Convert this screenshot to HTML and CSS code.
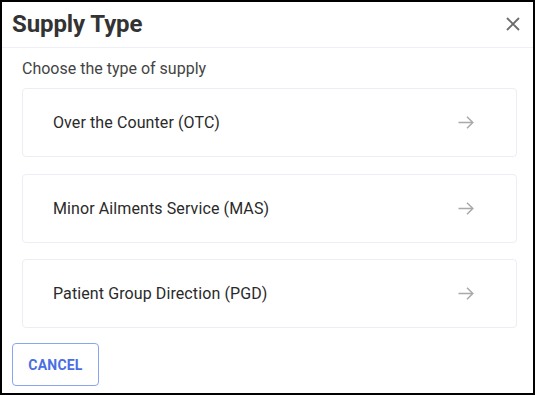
FILE: index.html
```html
<!DOCTYPE html>
<html>
<head>
<meta charset="utf-8">
<link rel="stylesheet" href="styles.css">
</head>
<body>
<div class="dialog">
  <div class="header">
    <h1 class="title">Supply Type</h1>
    <button class="close" aria-label="Close">
      <svg width="14" height="14" viewBox="0 0 14 14"><path d="M1 1L13 13M13 1L1 13" stroke="#6b6b6b" stroke-width="1.8" fill="none"/></svg>
    </button>
  </div>
  <div class="content">
    <p class="prompt">Choose the type of supply</p>
    <div class="options">
      <div class="option"><span>Over the Counter (OTC)</span>
        <svg class="arrow" width="16" height="13" viewBox="0 0 16 13"><path d="M0.5 6.5H15M9 0.8L14.8 6.5L9 12.2" stroke="#a9a9a9" stroke-width="1.5" fill="none"/></svg>
      </div>
      <div class="option"><span>Minor Ailments Service (MAS)</span>
        <svg class="arrow" width="16" height="13" viewBox="0 0 16 13"><path d="M0.5 6.5H15M9 0.8L14.8 6.5L9 12.2" stroke="#a9a9a9" stroke-width="1.5" fill="none"/></svg>
      </div>
      <div class="option"><span>Patient Group Direction (PGD)</span>
        <svg class="arrow" width="16" height="13" viewBox="0 0 16 13"><path d="M0.5 6.5H15M9 0.8L14.8 6.5L9 12.2" stroke="#a9a9a9" stroke-width="1.5" fill="none"/></svg>
      </div>
    </div>
  </div>
  <div class="footer">
    <button class="cancel">CANCEL</button>
  </div>
</div>
</body>
</html>
```

FILE: styles.css
```css
* { box-sizing: border-box; }
html, body { margin: 0; padding: 0; background: #fff; }
body { font-family: Roboto, "Noto Sans", Arial, sans-serif; }
.dialog {
  width: 535px;
  height: 395px;
  border: 2px solid #000;
  display: flex;
  flex-direction: column;
  background: #fff;
}
.header {
  height: 46px;
  border-bottom: 1px solid #eef0f7;
  display: flex;
  align-items: center;
  justify-content: space-between;
  padding: 0 13px 2px 10px;
}
.title {
  margin: 0;
  font-size: 24px;
  font-weight: 700;
  color: #333;
  letter-spacing: -0.1px;
}
.close {
  border: 0;
  background: none;
  padding: 0;
  width: 14px;
  height: 14px;
  display: flex;
}
.content {
  padding: 9px 16px 0 20px;
}
.prompt {
  margin: 0 0 7px;
  font-size: 16px;
  line-height: 24px;
  color: #444;
}
.options {
  display: flex;
  flex-direction: column;
  gap: 16.5px;
}
.option {
  height: 69px;
  border: 1px solid #eceef6;
  border-radius: 4px;
  display: flex;
  align-items: center;
  justify-content: space-between;
  padding: 0 42px 0 30px;
  font-size: 16px;
  font-weight: 400;
  color: #2a2a2a;
  letter-spacing: 0.1px;
}
.footer {
  padding: 15px 10px 0;
}
.cancel {
  width: 87px;
  height: 43px;
  border: 1px solid #8aa4f2;
  border-radius: 4px;
  background: #fff;
  color: #4a6ee3;
  font-family: Roboto, Arial, sans-serif;
  font-size: 14px;
  font-weight: 700;
  letter-spacing: 0.2px;
  padding: 0;
}
```
